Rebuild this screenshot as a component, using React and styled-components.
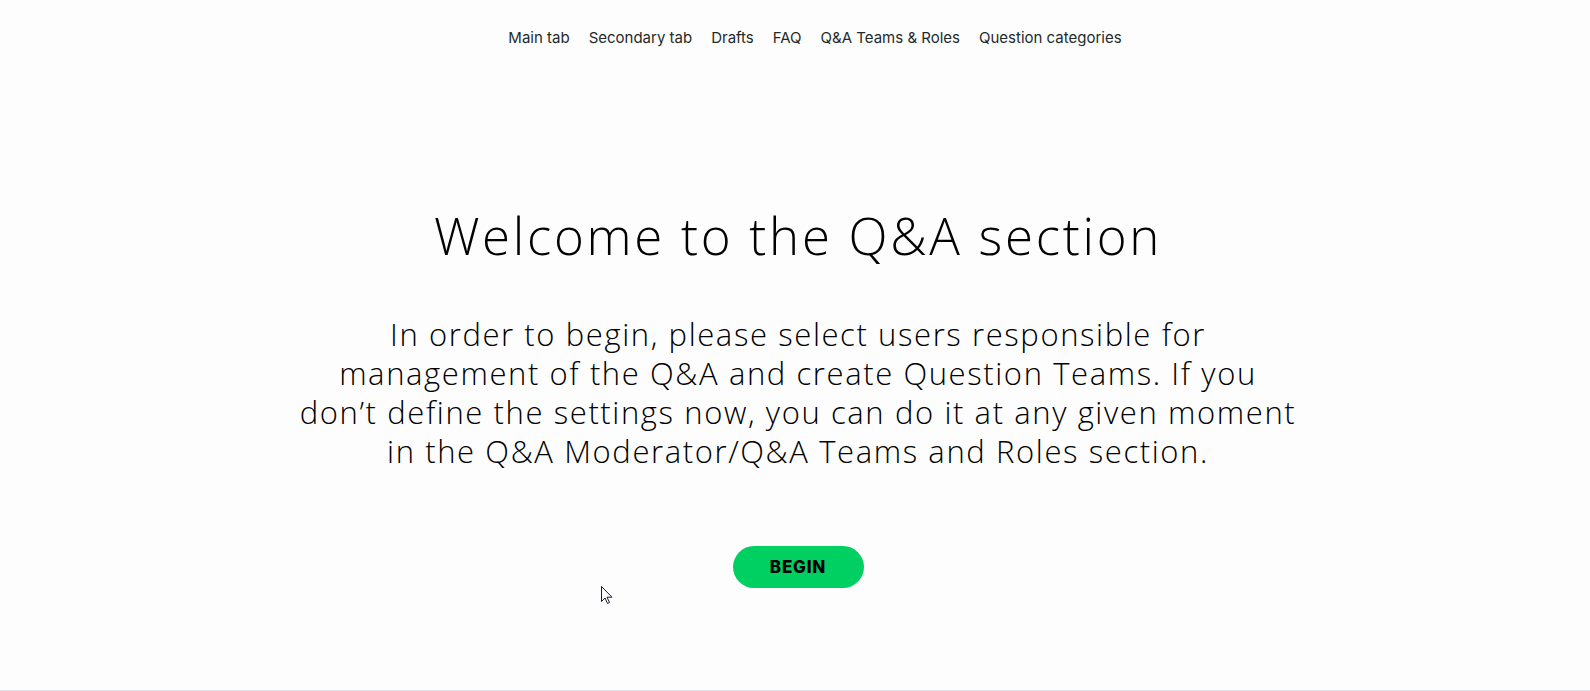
import styled, { createGlobalStyle } from 'styled-components';

const GlobalStyle = createGlobalStyle`
  html, body {
    margin: 0;
    padding: 0;
    background: #fdfdfd;
  }
`;

const Page = styled.div`
  position: relative;
  height: 690px;
  border-bottom: 1px solid #dfe3e8;
  background: #fdfdfd;
  display: flex;
  flex-direction: column;
  align-items: center;
  font-family: 'Open Sans', 'Liberation Sans', sans-serif;
  color: #000;
`;

const Nav = styled.nav`
  display: flex;
  gap: 19px;
  padding: 28px 0 0 40px;
  font-family: 'Inter', 'Liberation Sans', sans-serif;
  font-size: 15px;
  line-height: 20px;
  color: #1f2a2a;
`;

const NavItem = styled.a`
  cursor: pointer;
  text-decoration: none;
  color: inherit;
`;

const Main = styled.main`
  display: flex;
  flex-direction: column;
  align-items: center;
  text-align: center;
  padding-top: 157px;
  margin-left: 6px;
`;

const Title = styled.h1`
  margin: 0;
  font-weight: 300;
  font-size: 51px;
  line-height: 60px;
  letter-spacing: 2.7px;
`;

const Lead = styled.p`
  margin: 50px 0 0;
  font-weight: 300;
  font-size: 31px;
  line-height: 39px;
  letter-spacing: 1.6px;
`;

const BeginButton = styled.button`
  margin-top: 75px;
  width: 131px;
  height: 42px;
  border: none;
  border-radius: 21px;
  background: #00cf62;
  color: #000;
  font-family: 'Inter', 'Liberation Sans', sans-serif;
  font-weight: 800;
  font-size: 17px;
  letter-spacing: 0.8px;
  cursor: pointer;
`;

const Cursor = styled.svg`
  position: absolute;
  left: 601px;
  top: 586px;
`;

const tabs = ['Main tab', 'Secondary tab', 'Drafts', 'FAQ', 'Q&A Teams & Roles', 'Question categories'];

export default function App() {
  return (
    <>
      <GlobalStyle />
      <Page>
        <Nav>
          {tabs.map((t) => (
            <NavItem key={t}>{t}</NavItem>
          ))}
        </Nav>
        <Main>
          <Title>Welcome to the Q&amp;A section</Title>
          <Lead>
            In order to begin, please select users responsible for
            <br />
            management of the Q&amp;A and create Question Teams. If you
            <br />
            don’t define the settings now, you can do it at any given moment
            <br />
            in the Q&amp;A Moderator/Q&amp;A Teams and Roles section.
          </Lead>
          <BeginButton>BEGIN</BeginButton>
        </Main>
        <Cursor width="12" height="19" viewBox="0 0 12 19">
          <path d="M0.5 0.5 L0.5 15.5 L4 12 L6.5 17.5 L8.5 16.5 L6 11.2 L11 11.2 Z" fill="#fff" stroke="#1a1a2a" strokeWidth="1" strokeLinejoin="round" />
        </Cursor>
      </Page>
    </>
  );
}
